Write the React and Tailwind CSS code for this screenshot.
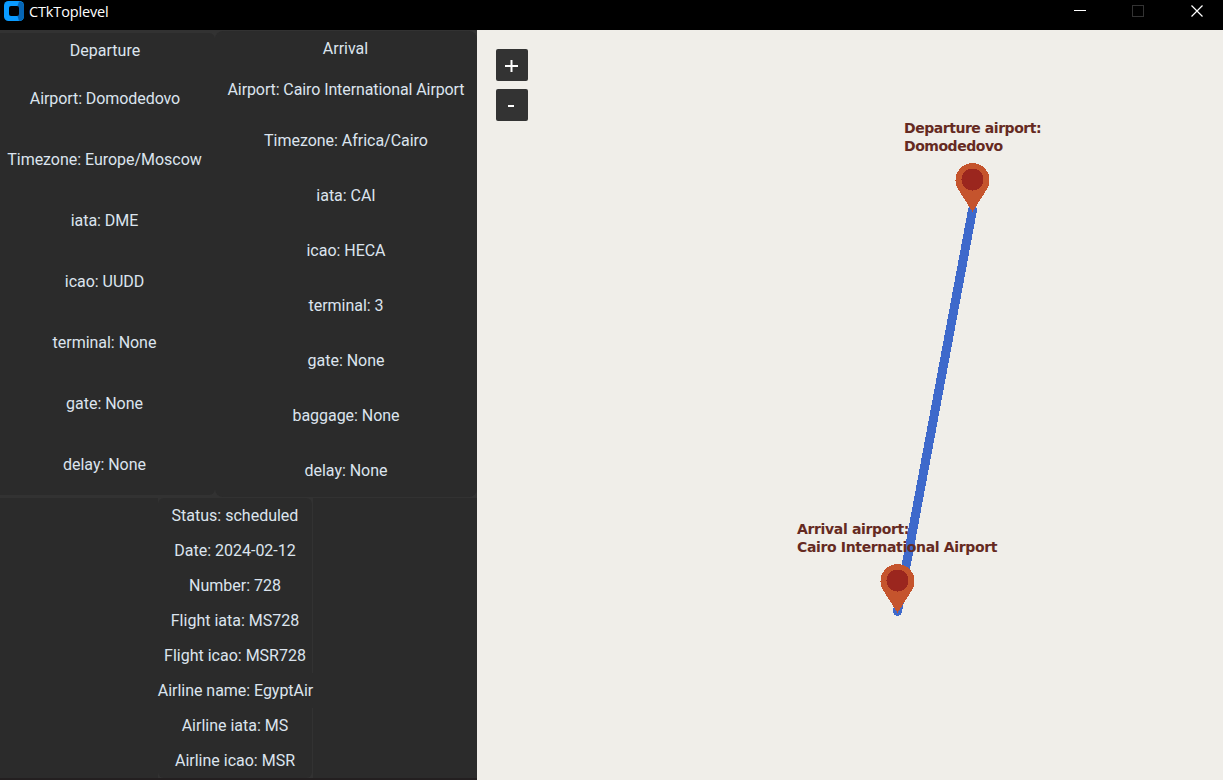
import React from "react";

const departure = ["Airport: Domodedovo", "Timezone: Europe/Moscow", "iata: DME", "icao: UUDD", "terminal: None", "gate: None", "delay: None"];
const arrival = ["Timezone: Africa/Cairo", "iata: CAI", "icao: HECA", "terminal: 3", "gate: None", "baggage: None", "delay: None"];
const flight = ["Status: scheduled", "Date: 2024-02-12", "Number: 728", "Flight iata: MS728", "Flight icao: MSR728", "Airline name: EgyptAir", "Airline iata: MS", "Airline icao: MSR"];

function Row({ children, className }) {
  return <div className={`flex shrink-0 items-center justify-center whitespace-nowrap ${className}`}>{children}</div>;
}

function TitleBar() {
  return (
    <header className="flex h-[30px] shrink-0 items-start bg-black text-white">
      <svg className="ml-1 mt-px" width="20" height="20" viewBox="0 0 20 20">
        <rect width="20" height="20" rx="4.500" fill="#0a9bff" />
        <path d="M15 0.500a5 5 0 0 1 5 4.500v10a5 5 0 0 1-5 5l-1.500-5 1.500-2V7l-1.500-2z" fill="#0665b5" />
        <rect x="5" y="5" width="10" height="10" rx="2" fill="#000" />
      </svg>
      <span className="ml-[5px] font-['Open_Sans',sans-serif] text-[14.5px] leading-[23px] tracking-[-0.14px]">CTkToplevel</span>
      <div className="ml-auto flex h-[22px] items-center">
        <svg width="150" height="22" viewBox="0 0 150 22" fill="none" shapeRendering="crispEdges">
          <path d="M1 10.5h12" stroke="#fff" />
          <rect x="59.5" y="5.500" width="11" height="11" stroke="#333" />
          <path d="M118.500 5.500l11 11M129.500 5.500l-11 11" stroke="#fff" strokeWidth="1.2" shapeRendering="auto" />
        </svg>
      </div>
    </header>
  );
}

function Pin({ x, y }) {
  return (
    <g transform={`translate(${x} ${y})`} shapeRendering="crispEdges">
      <path d="M0 0L-14.500-23A17 17 0 1 1 14.500-23Z" fill="#c5542d" />
      <circle cx="0" cy="-32.5" r="11" fill="#9b261e" />
    </g>
  );
}

function MapView() {
  return (
    <main className="relative h-[750px] w-[746px] bg-[#f0eee9]">
      <svg className="block" width="746" height="750" viewBox="477 30 746 750">
        <path d="M972.500 210L897.500 611.500" stroke="#3e69cb" strokeWidth="9" strokeLinecap="round" shapeRendering="crispEdges" />
        <Pin x={972.5} y={212} />
        <Pin x={897.5} y={613} />
      </svg>
      <div className="absolute left-[19px] top-[19px] flex flex-col gap-2 text-white">
        <button className="flex h-8 w-8 items-center justify-center rounded-[2px] bg-[#333]">
          <svg width="14" height="14" viewBox="0 0 14 14"><path d="M0 8h13M6.500 2v12" stroke="#fff" strokeWidth="2" /></svg>
        </button>
        <button className="flex h-8 w-8 items-center justify-center rounded-[2px] bg-[#333]">
          <svg width="8" height="4" viewBox="0 0 8 4"><path d="M0 3h6" stroke="#fff" strokeWidth="2" /></svg>
        </button>
      </div>
      <div className="absolute left-[427px] top-[89px] whitespace-nowrap font-['DejaVu_Sans',sans-serif] text-[14px] font-bold leading-[18px] tracking-[-0.46px] text-[#652a22]">
        Departure airport:<br />Domodedovo
      </div>
      <div className="absolute left-[320px] top-[490px] whitespace-nowrap font-['DejaVu_Sans',sans-serif] text-[14px] font-bold leading-[18px] tracking-[-0.35px] text-[#652a22]">
        Arrival airport:<br />Cairo International Airport
      </div>
    </main>
  );
}

export default function App() {
  return (
    <div className="flex h-[780px] w-[1223px] flex-col overflow-hidden bg-[#2b2b2b]">
      <TitleBar />
      <div className="flex">
        <aside className="flex h-[750px] w-[477px] flex-col bg-[#2b2b2b] font-['Roboto',sans-serif] text-base text-[#dce4ee]">
          <div className="flex h-[468px] bg-[#323232]">
            <section className="mb-px mt-[3px] w-[215px] bg-[#2b2b2b]">
              <div className="h-[464px] border-b-2 border-[#323232] bg-[#323232]">
                <div className="h-full rounded-r-md bg-[#2b2b2b] pr-[5px]">
                  <Row className="h-[35px]">Departure</Row>
                  <Row className="h-[61px] tracking-[-0.08px]">{departure[0]}</Row>
                  {departure.slice(1).map((t) => <Row key={t} className="h-[61px] pr-px tracking-[-0.03px]">{t}</Row>)}
                </div>
              </div>
            </section>
            <section className="mb-px mt-px w-[262px] rounded-lg bg-[#2b2b2b]">
              <Row className="h-[35px] pr-px">Arrival</Row>
              <Row className="h-[47px] tracking-[-0.1px]">Airport: Cairo International Airport</Row>
              {arrival.map((t) => <Row key={t} className="h-[55px] tracking-[-0.03px]">{t}</Row>)}
            </section>
          </div>
          <div className="flex h-[282px] justify-center border-b-2 border-[#231f20] pr-[6px]">
            <div className="w-[155px] border-r border-[#323232] bg-[#323232]">
              <section className="rounded-md bg-[#2b2b2b]">
                {flight.map((t) => (
                  <Row key={t} className={t.startsWith("Airline name") ? "-mr-px h-[35px] bg-[#2b2b2b] tracking-[-0.04px]" : "h-[35px]"}>{t}</Row>
                ))}
              </section>
            </div>
          </div>
        </aside>
        <MapView />
      </div>
    </div>
  );
}
